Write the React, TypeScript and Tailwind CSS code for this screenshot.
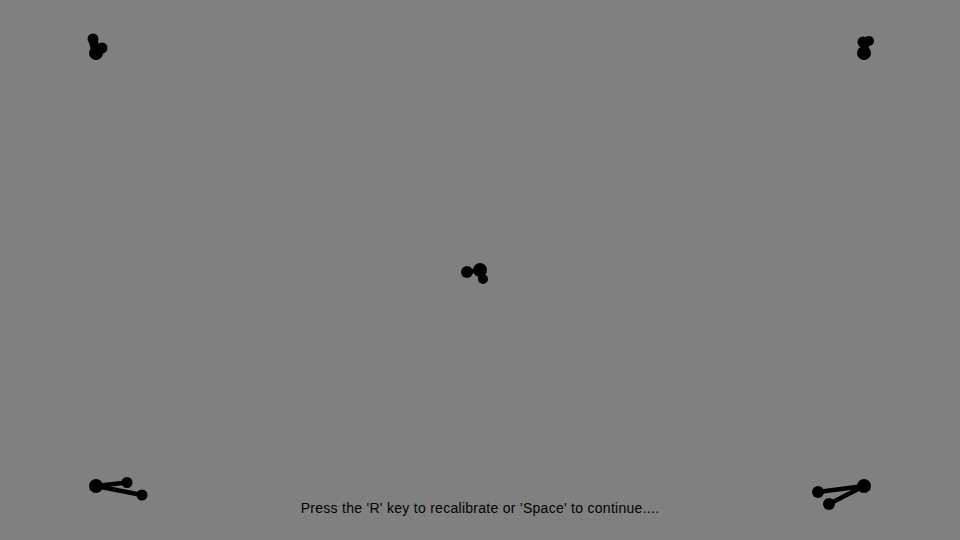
import React from 'react';

type Pt = [number, number];

interface Gaze {
  at: Pt;
  r: number;
  w?: number;
}

interface CalPoint {
  target: Pt;
  gaze: Gaze[];
}

// calibration targets (10% / 50% / 90% of the screen) and gaze samples for each eye
const points: CalPoint[] = [
  { target: [96, 53], gaze: [{ at: [93, 39], r: 5.5, w: 9 }, { at: [102, 48], r: 5.5, w: 8 }] },
  { target: [864, 53], gaze: [{ at: [863, 42], r: 5.5 }, { at: [869, 41], r: 5 }] },
  { target: [480, 270], gaze: [{ at: [467, 272], r: 6 }, { at: [483, 279], r: 5 }] },
  { target: [96, 486], gaze: [{ at: [127, 482.5], r: 5.5 }, { at: [142, 495], r: 5.5 }] },
  { target: [864, 486], gaze: [{ at: [818, 492], r: 6 }, { at: [829, 504], r: 6 }] },
];

const CalibrationCluster: React.FC<{ point: CalPoint }> = ({ point }) => {
  const [tx, ty] = point.target;
  return (
    <g>
      {point.gaze.map((g, i) => (
        <line
          key={`l${i}`}
          x1={tx}
          y1={ty}
          x2={g.at[0]}
          y2={g.at[1]}
          stroke="#000"
          strokeWidth={g.w ?? 4.5}
          strokeLinecap="round"
        />
      ))}
      <circle cx={tx} cy={ty} r={7} fill="#000" />
      {point.gaze.map((g, i) => (
        <circle key={`c${i}`} cx={g.at[0]} cy={g.at[1]} r={g.r} fill="#000" />
      ))}
    </g>
  );
};

export default function App() {
  return (
    <div className="relative w-[960px] h-[540px] bg-[#808080] overflow-hidden flex flex-col justify-end items-center pb-[24px]">
      <svg className="absolute inset-0" width={960} height={540} viewBox="0 0 960 540">
        {points.map((p, i) => (
          <CalibrationCluster key={i} point={p} />
        ))}
      </svg>
      <p className="relative text-[14px] leading-[16px] tracking-[0.28px] text-black font-['Liberation_Sans',Arial,sans-serif]">
        Press the 'R' key to recalibrate or 'Space' to continue....
      </p>
    </div>
  );
}
